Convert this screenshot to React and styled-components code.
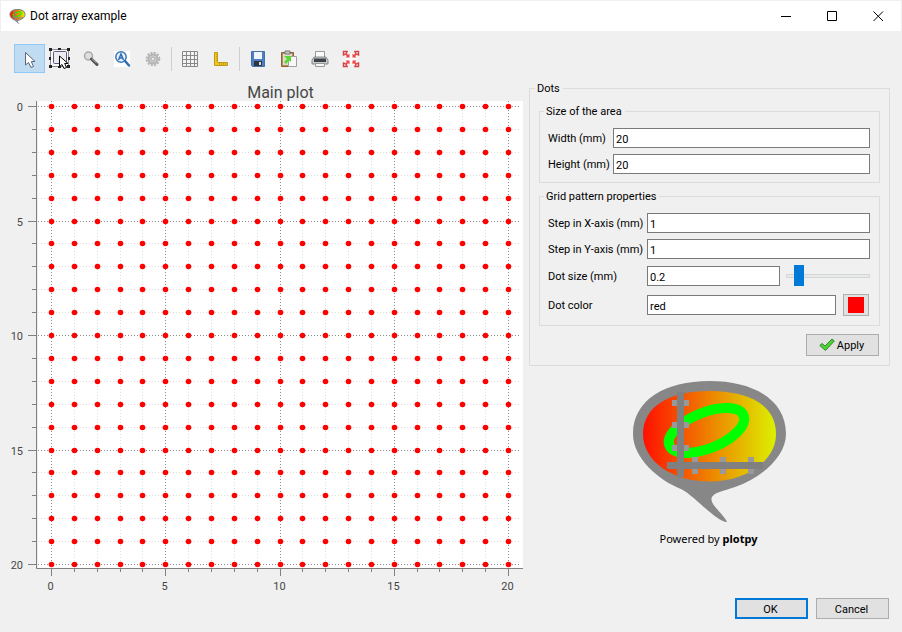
import React, { useState } from "react";
import styled, { createGlobalStyle } from "styled-components";

const GlobalStyle = createGlobalStyle`
  * { box-sizing: border-box; }
  body {
    margin: 0;
    background: #f0f0f0;
    font-family: Roboto, "Noto Sans", sans-serif;
    font-size: 11px;
    line-height: 14px;
    color: #000;
  }
  button, input { font: inherit; color: inherit; }
`;

const Window = styled.div`
  display: flex;
  flex-direction: column;
  min-height: 100vh;
`;

const TitleBar = styled.header`
  display: flex;
  align-items: center;
  height: 31px;
  padding-left: 8px;
  background: #fff;
  border: solid #efefef;
  border-width: 1px 1px 0;
`;

const Title = styled.h1`
  flex: 1;
  margin: 0 0 0 4px;
  font-size: 12px;
  font-weight: 400;
  line-height: 16px;
`;

const WindowButton = styled.button`
  display: flex;
  align-items: center;
  justify-content: center;
  width: 46px;
  height: 30px;
  padding: 0;
  border: 0;
  background: none;
`;

const Toolbar = styled.div`
  display: flex;
  align-items: center;
  padding: 13px 14px 8px;
`;

const ToolButton = styled.button`
  display: flex;
  align-items: center;
  justify-content: center;
  width: 31px;
  height: 29px;
  padding: 0;
  border: 1px solid ${(p) => (p.$active ? "#90c8f6" : "transparent")};
  background: ${(p) => (p.$active ? "#c0dcf3" : "none")};
`;

const Separator = styled.span`
  width: 1px;
  height: 24px;
  margin: 0 3px 0 2px;
  background: #cfcfcf;
`;

const Main = styled.main`
  display: flex;
  gap: 6px;
  padding: 0 12px 0 11px;
`;

const PlotPane = styled.div`
  flex: 1;
  min-width: 0;
`;

const PlotSvg = styled.svg`
  display: block;
  width: 100%;
  height: auto;
`;

const SidePane = styled.div`
  display: flex;
  flex-direction: column;
  flex: 0 0 361px;
`;

const Group = styled.fieldset`
  min-width: 0;
  margin: 0;
  padding: 9px;
  border: 1px solid #dcdcdc;
`;

const SubGroup = styled(Group)`
  padding: 10px 9px 8px 8px;
  & + & { margin-top: 6px; }
`;

const Legend = styled.legend`
  margin-left: -4px;
  padding: 2px 3px 0 2px;
  line-height: 12px;
`;

const Form = styled.div`
  display: grid;
  grid-template-columns: ${(p) => p.$labelWidth}px 1fr;
  row-gap: 6px;
  align-items: center;
`;

const Label = styled.label`
  padding-top: 2px;
  white-space: nowrap;
`;

const TextBox = styled.input`
  width: 100%;
  min-width: 0;
  height: 20px;
  padding: 2px 2px 0;
  border: 1px solid #7a7a7a;
  border-radius: 0;
  background: #fff;
  outline: none;
`;

const Combined = styled.div`
  display: flex;
  align-items: center;
  gap: ${(p) => p.$gap}px;
  height: ${(p) => p.$height}px;
`;

const Slider = styled.input`
  appearance: none;
  flex: 0 0 84px;
  width: 84px;
  height: 22px;
  margin: 0;
  background: none;

  &::-webkit-slider-runnable-track {
    height: 4px;
    border: 1px solid #d6d6d6;
    background: #e7eaea;
  }
  &::-webkit-slider-thumb {
    appearance: none;
    width: 10px;
    height: 21px;
    margin-top: -10px;
    border: 0;
    border-radius: 0;
    background: #007ad9;
  }
`;

const Button = styled.button`
  display: flex;
  align-items: center;
  justify-content: center;
  gap: 2px;
  width: 73px;
  height: ${(p) => (p.$tall ? 22 : 21)}px;
  padding: 0;
  border: ${(p) => (p.$primary ? "2px solid #0078d7" : "1px solid #adadad")};
  background: #e1e1e1;
`;

const ButtonText = styled.span`
  padding: 2px 2px 0 0;
`;

const ColorButton = styled(Button)`
  flex: 0 0 26px;
  width: 26px;
  margin-right: 1px;
`;

const Swatch = styled.span`
  width: 16px;
  height: 16px;
  background: ${(p) => p.$color};
`;

const Actions = styled.div`
  display: flex;
  justify-content: flex-end;
  padding: 8px 1px 0 0;
`;

const Branding = styled.div`
  display: flex;
  flex-direction: column;
  align-items: center;
  padding-top: 15px;
`;

const Credit = styled.p`
  margin: 9px 2px 0 0;
  font-family: "Noto Sans", sans-serif;
`;

const Footer = styled.footer`
  display: flex;
  justify-content: flex-end;
  gap: 8px;
  margin-top: auto;
  padding: 0 13px 13px;
`;

function Logo({ width, height, id }) {
  return (
    <svg width={width} height={height} viewBox="13 11 153 142" aria-hidden="true">
      <defs>
        <linearGradient id={id}>
          <stop offset="0" stopColor="#ff1000" />
          <stop offset="0.5" stopColor="#ee8200" />
          <stop offset="1" stopColor="#dcf000" />
        </linearGradient>
      </defs>
      <path
        d="M89.5 11C134 11 166 30 166 64C166 86 142 108 115 117C102 121.500 91 123 91.500 130C92 136 105 146 107 152C98 153 73 125 62 119.500C38 110 13 88 13 64C13 30 45 11 89.500 11Z"
        fill="#878787"
      />
      <path
        d="M89.500 21C129 21 156 35 156 64C156 91 126 111.500 89.500 111.500C52 111.500 23 91 23 64C23 36 50 21 89.500 21Z"
        fill={`url(#${id})`}
      />
      <ellipse cx="86.500" cy="60.500" rx="40" ry="18" transform="rotate(-22 86.500 60.500)" fill="none" stroke="#0f0" strokeWidth="10" />
      <path
        d="M52 30h17v6H52zM52 52h17v6H52zM52 75h17v6H52zM72 87h6v17h-6zM100 87h6v17h-6zM128 87h6v17h-6z"
        fill="#999"
      />
      <path d="M57 22h7v85h-7zM47 92h96v7H47z" fill="#808080" />
    </svg>
  );
}

const STEPS = Array.from({ length: 21 }, (_, i) => i);
const px = (v) => 40.5 + Math.round(v * 22.85);
const py = (v) => 25.5 + Math.round(v * 22.9);

function Plot() {
  return (
    <PlotSvg viewBox="0 0 512 514" role="img" aria-label="Main plot">
      <text x="269.500" y="17" fontSize="16" fill="#464646" textAnchor="middle">Main plot</text>
      <rect x="27" y="20" width="485" height="467" fill="#fff" />
      {[false, true].map((major) =>
        STEPS.filter((v) => (v % 5 === 0) === major).map((v) => (
          <g key={v} stroke={major ? "#8c8c8c" : "#dedede"} strokeDasharray="1 2">
            <path d={`M${px(v)} 20V487M27 ${py(v)}H508`} />
          </g>
        ))
      )}
      <g stroke="#808080">
        <path d="M25.500 20V487.500H512" fill="none" />
        {STEPS.map((v) => {
          const len = v % 5 === 0 ? 8 : 4;
          return <path key={v} d={`M${25 - len} ${py(v)}H25M${px(v)} 488V${487 + len}`} />;
        })}
      </g>
      {STEPS.map((row) =>
        STEPS.map((col) => (
          <circle key={`${row}-${col}`} cx={px(col)} cy={py(row)} r="2.800" fill="#f00" />
        ))
      )}
      <g fontSize="11" fill="#464646">
        {[0, 5, 10, 15, 20].map((v) => (
          <g key={v}>
            <text x="12" y={py(v) + 4} textAnchor="end">{v}</text>
            <text x={px(v) - 1} y="509" textAnchor="middle">{v}</text>
          </g>
        ))}
      </g>
    </PlotSvg>
  );
}

const ICONS = {
  pointer: (
    <path d="M6.500 4.500V17L9.500 14.500L12 19.500L14.500 18.500L12.300 13.500H16Z" fill="#fff" stroke="#606574" />
  ),
  select: (
    <>
      <rect x="0.500" y="1.500" width="18" height="17" fill="#f8f8f8" stroke="#222" strokeDasharray="1 1" />
      <path d="M-1 0h3v3h-3zM8 0h3v2H8zM17 0h3v3h-3zM-1 17h3v3h-3zM8 18h3v2H8zM17 17h3v3h-3zM-1 9h2v3h-2zM18 9h2v3h-2z" fill="#222" />
      <rect x="3.500" y="3.500" width="13" height="12" rx="1" fill="#ececee" stroke="#5a5880" />
      <path d="M9.500 8V18.500L12 16.500L14 20.500L16.500 19.500L14.700 15.500H18Z" fill="#fff" stroke="#000" />
    </>
  ),
  zoom: (
    <>
      <circle cx="7.500" cy="8" r="4" fill="#dedede" stroke="#a8a8a8" strokeWidth="1.500" />
      <path d="M10.500 11L16 16.500" stroke="#505050" strokeWidth="3" strokeLinecap="round" />
      <path d="M10.800 10.500L15.500 15" stroke="#c0c0c0" />
    </>
  ),
  autoscale: (
    <>
      <path d="M2 3h16v16H2z" fill="#fff" />
      <circle cx="9" cy="9" r="5.200" fill="#e8f2fb" stroke="#3b78b8" strokeWidth="1.500" />
      <path d="M13 13L17 17.500" stroke="#2f6db0" strokeWidth="2.500" strokeLinecap="round" />
      <path d="M6.500 12L9 6L11.500 12M7.500 10H10.500" fill="none" stroke="#2f6db0" strokeWidth="1.500" />
    </>
  ),
  gear: (
    <>
      <circle cx="10" cy="11" r="6.300" fill="none" stroke="#b4b4b4" strokeWidth="2" strokeDasharray="2 1.300" />
      <circle cx="10" cy="11" r="4.500" fill="#d0d0d0" stroke="#b4b4b4" strokeWidth="2" />
      <circle cx="10" cy="11" r="2" fill="#e6e6e6" stroke="#adadad" />
    </>
  ),
  grid: (
    <path
      d="M2.500 3.500h15v15h-15zM6.500 3.500v15M10.500 3.500v15M14.500 3.500v15M2.500 7.500h15M2.500 11.500h15M2.500 15.500h15"
      fill="#f4f4f4"
      stroke="#888"
    />
  ),
  ruler: (
    <>
      <path d="M3.500 4.500H6.500V14.500H16.500V17.500H3.500Z" fill="#f0c820" stroke="#c09a14" />
      <path d="M5 6.500h2M5 8.500h2M5 10.500h2M5 12.500h2M8.500 15v2M10.500 15v2M12.500 15v2M14.500 15v2" stroke="#c8a018" />
    </>
  ),
  save: (
    <>
      <path d="M3.500 3.500H16.500V18.500H4.500L3.500 17.500Z" fill="#4f7fc0" stroke="#4470ac" />
      <path d="M6 4h8v7H6z" fill="#f0f5fb" />
      <path d="M6 13h8v5H6z" fill="#2d3540" />
      <path d="M11 14h2v3h-2z" fill="#d8dee8" />
    </>
  ),
  paste: (
    <>
      <path d="M2.500 4.500H14.500V18.500H2.500Z" fill="#b98b5a" stroke="#8c6235" />
      <path d="M4 6h9v11H4z" fill="#d9dccf" />
      <path d="M6 3h5v3H6z" fill="#c9c9c9" stroke="#777" />
      <path d="M9.500 8.500H17.500V18.500H9.500Z" fill="#f8f8f8" stroke="#a0a0a0" />
      <path d="M5 8H12V14L10 12.500L7 16L5 14L8 11Z" fill="#58d82e" />
    </>
  ),
  print: (
    <>
      <path d="M5.500 3.500H14.500V10H5.500Z" fill="#fafafa" stroke="#999" />
      <path d="M4 9H16L18 12V16H2V12Z" fill="#c8c8c8" stroke="#8a8a8a" />
      <path d="M4 10.500H16V14H4Z" fill="#3d4248" />
      <path d="M5.500 15.500H14.500V18.500H5.500Z" fill="#f6f6f6" stroke="#999" />
    </>
  ),
  expand: (
    <>
      <path d="M4 5h12v12H4z" fill="#fafafa" />
      <g fill="#fff" stroke="#d04448" strokeWidth="1.500">
        <path d="M2.500 7V3.500H6L5 6ZM14 3.500H17.500V7L15 6ZM17.500 15V18.500H14L15 16ZM6 18.500H2.500V15L5 16Z" />
      </g>
      <path d="M5 6L7.500 8.500M15 6L12.500 8.500M5 16L7.500 13.500M15 16L12.500 13.500" stroke="#f05050" strokeWidth="2" />
      <path d="M8.500 5.500V9.500H4.500ZM11.500 5.500V9.500H15.500ZM8.500 16.500V12.500H4.500ZM11.500 16.500V12.500H15.500Z" fill="#f24444" />
    </>
  ),
};

const TOOLS = [
  [
    ["pointer", "Selection"],
    ["select", "Rectangle selection"],
    ["zoom", "Zoom"],
    ["autoscale", "Auto scale"],
    ["gear", "Parameters"],
  ],
  [
    ["grid", "Grid"],
    ["ruler", "Axes"],
  ],
  [
    ["save", "Save"],
    ["paste", "Copy to clipboard"],
    ["print", "Print"],
    ["expand", "Fit view"],
  ],
];

const ToolIcon = styled.svg`
  display: block;
  overflow: visible;
`;

function Tools() {
  const [active, setActive] = useState("pointer");
  return (
    <Toolbar role="toolbar">
      {TOOLS.map((group, i) => (
        <React.Fragment key={i}>
          {i > 0 && <Separator />}
          {group.map(([name, label]) => (
            <ToolButton key={name} type="button" aria-label={label} $active={active === name} onClick={() => setActive(name)}>
              <ToolIcon width="21" height="21" viewBox="0 0 21 21" aria-hidden="true">{ICONS[name]}</ToolIcon>
            </ToolButton>
          ))}
        </React.Fragment>
      ))}
    </Toolbar>
  );
}

function Field({ id, label, value }) {
  return (
    <>
      <Label htmlFor={id}>{label}</Label>
      <TextBox id={id} type="text" defaultValue={value} />
    </>
  );
}

export default function App() {
  return (
    <Window>
      <GlobalStyle />
      <TitleBar>
        <Logo width={17} height={15} id="title-logo" />
        <Title>Dot array example</Title>
        <WindowButton type="button" aria-label="Minimize">
          <svg width="11" height="11" stroke="#000"><path d="M0 5.500H10" /></svg>
        </WindowButton>
        <WindowButton type="button" aria-label="Maximize">
          <svg width="11" height="11" stroke="#000" fill="none"><path d="M.5 .5H9.500V9.500H.5Z" /></svg>
        </WindowButton>
        <WindowButton type="button" aria-label="Close">
          <svg width="11" height="11" stroke="#000"><path d="M.5 .5L10 10M10 .5L.5 10" /></svg>
        </WindowButton>
      </TitleBar>
      <Tools />
      <Main>
        <PlotPane>
          <Plot />
        </PlotPane>
        <SidePane>
          <Group>
            <Legend>Dots</Legend>
            <SubGroup>
              <Legend>Size of the area</Legend>
              <Form $labelWidth={65}>
                <Field id="width" label="Width (mm)" value="20" />
                <Field id="height" label="Height (mm)" value="20" />
              </Form>
            </SubGroup>
            <SubGroup>
              <Legend>Grid pattern properties</Legend>
              <Form $labelWidth={99}>
                <Field id="step-x" label="Step in X-axis (mm)" value="1" />
                <Field id="step-y" label="Step in Y-axis (mm)" value="1" />
                <Label htmlFor="dot-size">Dot size (mm)</Label>
                <Combined $gap={6} $height={22}>
                  <TextBox id="dot-size" type="text" defaultValue="0.2" />
                  <Slider type="range" min="0" max="10" defaultValue="1" aria-label="Dot size" />
                </Combined>
                <Label htmlFor="dot-color">Dot color</Label>
                <Combined $gap={7} $height={24}>
                  <TextBox id="dot-color" type="text" defaultValue="red" />
                  <ColorButton type="button" $tall aria-label="Choose dot color">
                    <Swatch $color="#f00" />
                  </ColorButton>
                </Combined>
              </Form>
            </SubGroup>
            <Actions>
              <Button type="button" $tall>
                <svg width="16" height="14" viewBox="0 0 16 14" aria-hidden="true">
                  <path d="M.8 7.500L3 5.500L6 8L13 1L15.300 3L6.500 12.500Z" fill="#4fd03a" stroke="#2c8a22" />
                </svg>
                <ButtonText>Apply</ButtonText>
              </Button>
            </Actions>
          </Group>
          <Branding>
            <Logo width={153} height={142} id="main-logo" />
            <Credit>Powered by <b>plotpy</b></Credit>
          </Branding>
        </SidePane>
      </Main>
      <Footer>
        <Button type="button" $primary><ButtonText>OK</ButtonText></Button>
        <Button type="button"><ButtonText>Cancel</ButtonText></Button>
      </Footer>
    </Window>
  );
}
